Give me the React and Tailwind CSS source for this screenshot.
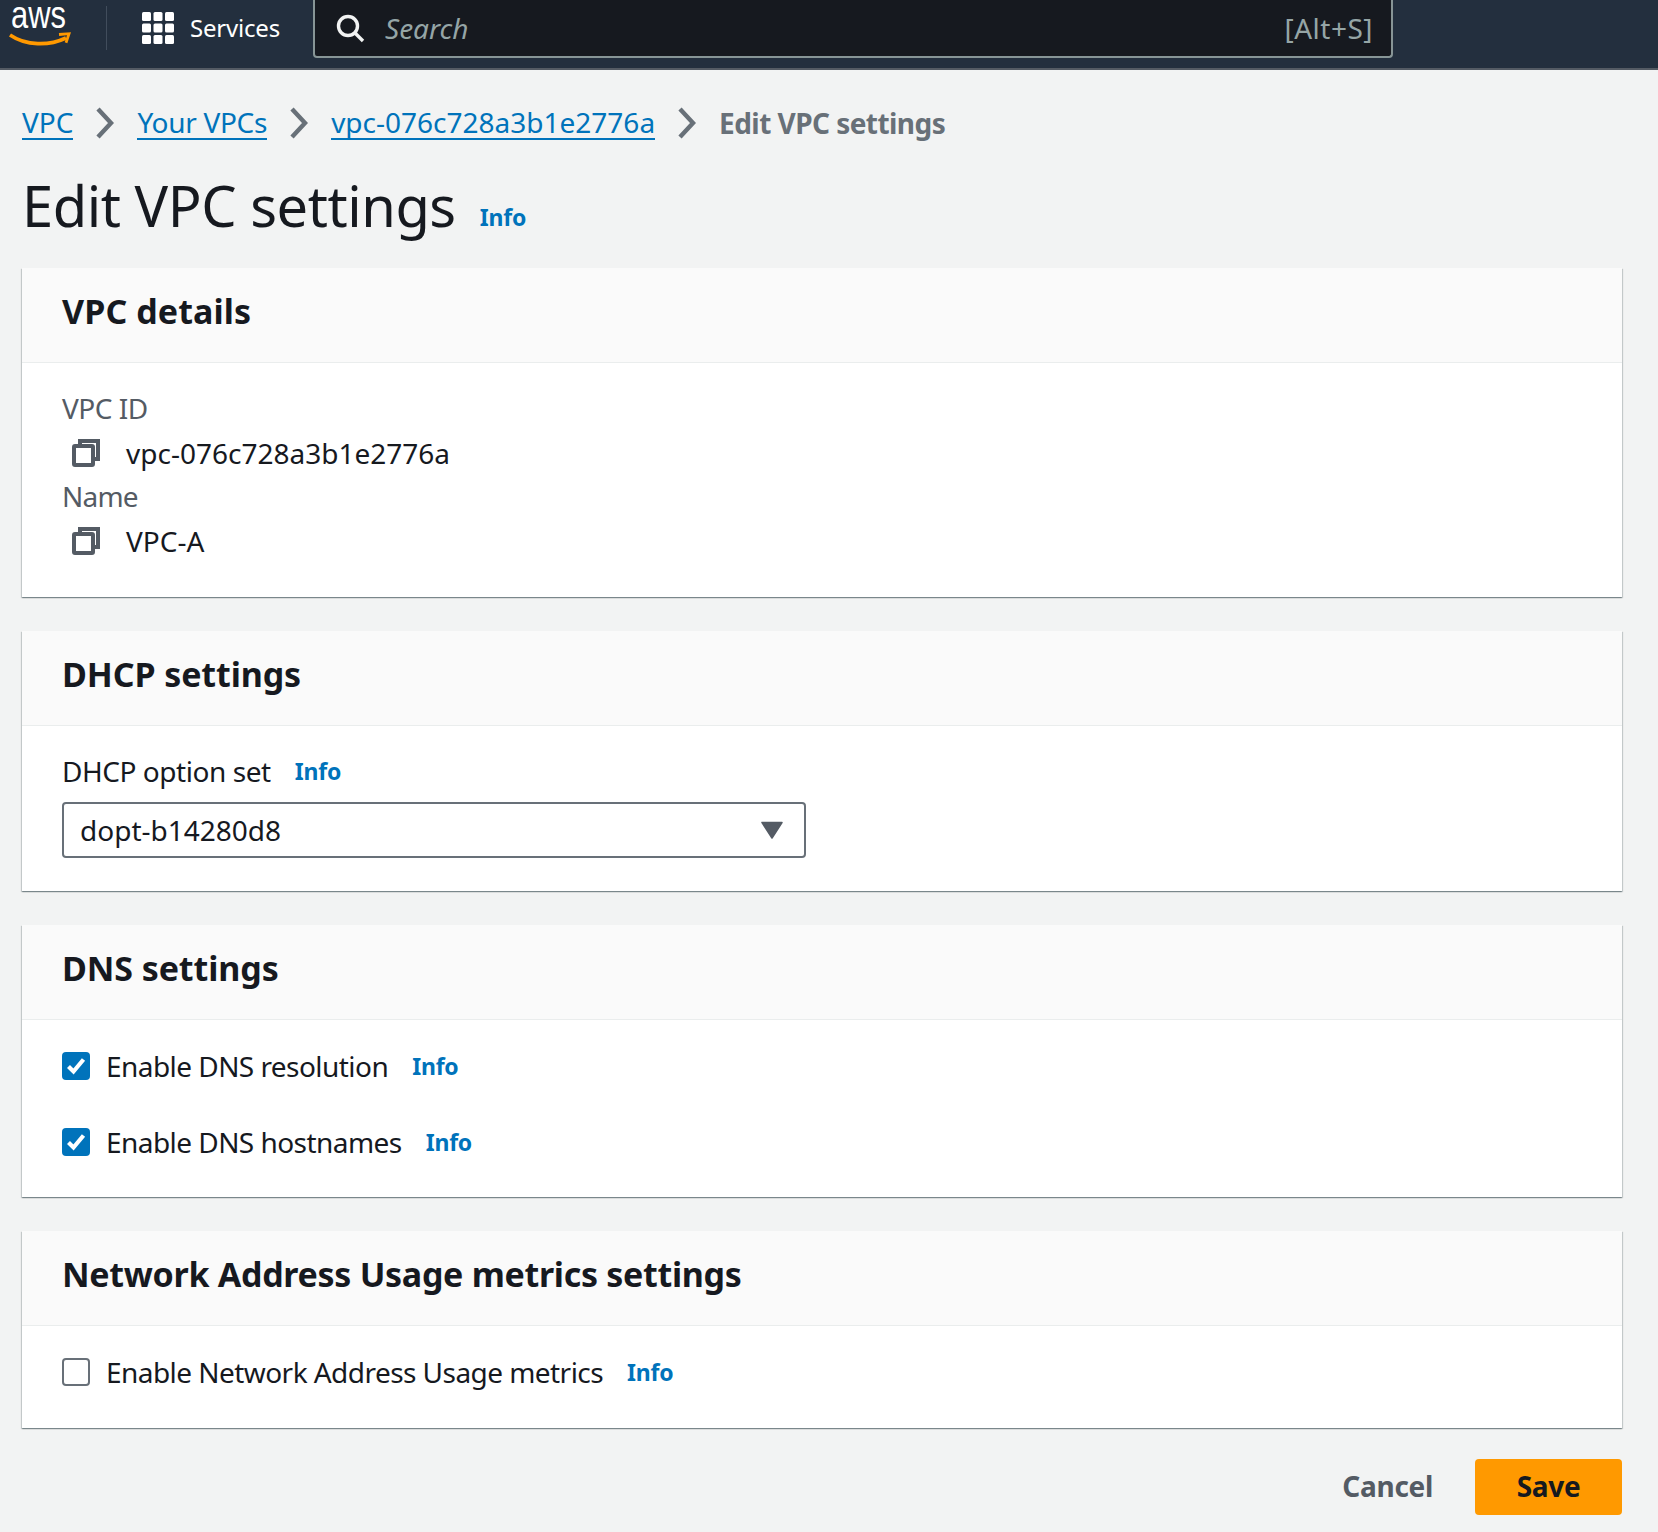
const Info = ({ className = '' }) => (
  <a className={`text-[23px] leading-[32px] font-bold text-[#0073bb] tracking-[-0.2px] ${className}`}>Info</a>
);

const Chevron = () => (
  <svg width="20" height="32" viewBox="0 0 20 32" fill="none" className="shrink-0">
    <path d="M3 2l13 14L3 30" stroke="#687078" strokeWidth="4.4" />
  </svg>
);

const CopyIcon = () => (
  <svg width="28" height="28" viewBox="0 0 28 28" fill="none" className="shrink-0">
    <path d="M8 7V2h18v18h-5" stroke="#545b64" strokeWidth="4" />
    <rect x="2" y="7" width="19" height="19" rx="1" stroke="#545b64" strokeWidth="4" />
  </svg>
);

const Card = ({ title, titleClass = 'tracking-[0.1px]', bodyClass, children }) => (
  <section className="bg-white shadow-[0_1px_1px_0_rgba(0,28,36,0.3),1px_1px_1px_0_rgba(0,28,36,0.15),-1px_1px_1px_0_rgba(0,28,36,0.15)]">
    <div className="h-[95px] bg-[#fafafa] border-b border-[#eaeded] pl-[40px] flex items-center">
      <h2 className={`text-[34px] leading-[44px] font-bold text-[#16191f] pb-[8px] ${titleClass}`}>{title}</h2>
    </div>
    <div className={bodyClass}>{children}</div>
  </section>
);

const CheckRow = ({ label, checked }) => (
  <div className="flex items-center h-[32px]">
    {checked ? (
      <span className="w-[28px] h-[28px] rounded-[4px] bg-[#0073bb] flex items-center justify-center shrink-0">
        <svg width="20" height="20" viewBox="0 0 20 20" fill="none">
          <path d="M2.5 10.5l5 5L17.5 3.5" stroke="#fff" strokeWidth="4.2" />
        </svg>
      </span>
    ) : (
      <span className="w-[28px] h-[28px] rounded-[4px] bg-white border-2 border-[#687078] shrink-0" />
    )}
    <span className="ml-[16px] text-[28px] leading-[32px] text-[#16191f] tracking-[-0.55px]">{label}</span>
    <Info className="ml-[24px]" />
  </div>
);

export default function App() {
  return (
    <div className="min-h-[1532px] bg-[#f2f3f3] font-['Noto_Sans',sans-serif] overflow-hidden">
      <header className="h-[70px] bg-[#232f3e] border-b-2 border-[#545b64] flex items-start">
        <div className="w-[113px] h-[50px] relative shrink-0">
          <svg width="72" height="50" viewBox="0 0 72 50" fill="none" className="absolute left-0 top-0">
            <text x="11" y="28" fontSize="38" fill="#fff" textLength="55" lengthAdjust="spacingAndGlyphs" fontFamily="'Liberation Sans', sans-serif">aws</text>
            <path d="M10 35c16 11 39 11 56 3" stroke="#ff9900" strokeWidth="3.6" />
            <path d="M59 34.5l10-.8-3 9" stroke="#ff9900" strokeWidth="2.8" />
          </svg>
          <div className="absolute right-[6px] top-[6px] w-px h-[44px] bg-[#414d5c]" />
        </div>
        <div className="flex items-center h-[56px] ml-[29px] w-[171px] shrink-0">
          <svg width="32" height="32" viewBox="0 0 32 32" fill="#fff" className="shrink-0">
            <rect x="0" y="0" width="9" height="9" rx="1.5" />
            <rect x="11.5" y="0" width="9" height="9" rx="1.5" />
            <rect x="23" y="0" width="9" height="9" rx="1.5" />
            <rect x="0" y="11.5" width="9" height="9" rx="1.5" />
            <rect x="11.5" y="11.5" width="9" height="9" rx="1.5" />
            <rect x="23" y="11.5" width="9" height="9" rx="1.5" />
            <rect x="0" y="23" width="9" height="9" rx="1.5" />
            <rect x="11.5" y="23" width="9" height="9" rx="1.5" />
            <rect x="23" y="23" width="9" height="9" rx="1.5" />
          </svg>
          <span className="ml-[16px] text-[24px] leading-[32px] text-white tracking-[-0.2px]">Services</span>
        </div>
        <div className="w-[1080px] h-[58px] bg-[#16191f] border-2 border-t-0 border-[#879596] rounded-b-[4px] flex items-center pl-[20px] pr-[18px] shrink-0">
          <svg width="30" height="30" viewBox="0 0 30 30" fill="none" className="shrink-0">
            <circle cx="13" cy="13" r="9.5" stroke="#f2f3f3" strokeWidth="3.4" />
            <path d="M20 20l8 8" stroke="#f2f3f3" strokeWidth="3.4" />
          </svg>
          <span className="ml-[20px] text-[28px] leading-[32px] italic text-[#95a5a6]">Search</span>
          <span className="ml-auto text-[28px] leading-[32px] text-[#95a5a6] tracking-[0.5px]">[Alt+S]</span>
        </div>
      </header>

      <main className="px-[22px] w-[1644px]">
        <nav className="flex items-center mt-[37px] h-[32px] text-[28px] leading-[32px]">
          <a className="text-[#0073bb] border-b-2 border-[#0073bb]">VPC</a>
          <span className="mx-[22px] flex"><Chevron /></span>
          <a className="text-[#0073bb] border-b-2 border-[#0073bb] tracking-[-0.3px]">Your VPCs</a>
          <span className="mx-[22px] flex"><Chevron /></span>
          <a className="text-[#0073bb] border-b-2 border-[#0073bb]">vpc-076c728a3b1e2776a</a>
          <span className="mx-[22px] flex"><Chevron /></span>
          <span className="font-bold text-[#687078] tracking-[-0.55px]">Edit VPC settings</span>
        </nav>

        <div className="flex items-baseline mt-[33px] h-[66px]">
          <h1 className="text-[56px] leading-[66px] font-normal text-[#16191f] tracking-[-0.45px]">Edit VPC settings</h1>
          <Info className="ml-[24px] -translate-y-px" />
        </div>

        <div className="mt-[30px] flex flex-col gap-[34px]">
          <Card title="VPC details" bodyClass="h-[234px] pl-[40px] pt-[29px]">
            <div className="text-[28px] leading-[32px] text-[#545b64] tracking-[-0.5px]">VPC ID</div>
            <div className="flex items-center h-[32px] mt-[13px] pl-[10px]">
              <CopyIcon />
              <span className="ml-[26px] text-[28px] leading-[32px] text-[#16191f]">vpc-076c728a3b1e2776a</span>
            </div>
            <div className="text-[28px] leading-[32px] text-[#545b64] mt-[11px] tracking-[-0.8px]">Name</div>
            <div className="flex items-center h-[32px] mt-[13px] pl-[10px]">
              <CopyIcon />
              <span className="ml-[26px] text-[28px] leading-[32px] text-[#16191f]">VPC-A</span>
            </div>
          </Card>

          <Card title="DHCP settings" titleClass="tracking-[-0.1px]" bodyClass="h-[165px] pl-[40px] pt-[29px]">
            <div className="flex items-center h-[32px]">
              <span className="text-[28px] leading-[32px] text-[#16191f] tracking-[-0.45px]">DHCP option set</span>
              <Info className="ml-[24px]" />
            </div>
            <div className="mt-[15px] w-[744px] h-[56px] rounded-[4px] border-2 border-[#687078] bg-white flex items-center pl-[16px] pr-[21px]">
              <span className="text-[28px] leading-[32px] text-[#16191f] pb-[1px]">dopt-b14280d8</span>
              <svg width="22" height="18" viewBox="0 0 22 18" fill="#545b64" className="ml-auto">
                <path d="M1 1.5h20L11 17z" stroke="#545b64" strokeWidth="1.5" strokeLinejoin="round" />
              </svg>
            </div>
          </Card>

          <Card title="DNS settings" titleClass="tracking-[-0.1px]" bodyClass="h-[177px] pl-[40px] pt-[30px]">
            <CheckRow label="Enable DNS resolution" checked />
            <div className="mt-[44px]">
              <CheckRow label="Enable DNS hostnames" checked />
            </div>
          </Card>

          <Card title="Network Address Usage metrics settings" titleClass="tracking-[-0.3px]" bodyClass="h-[102px] pl-[40px] pt-[30px]">
            <CheckRow label="Enable Network Address Usage metrics" />
          </Card>
        </div>

        <div className="flex items-center justify-end mt-[31px]">
          <button className="text-[28px] leading-[32px] font-bold text-[#545b64] tracking-[-0.3px] mr-[42px] pb-[2px]">Cancel</button>
          <button className="w-[147px] h-[56px] rounded-[4px] bg-[#ff9900] text-[28px] leading-[32px] font-bold text-[#16191f] tracking-[-0.3px] pb-[2px]">Save</button>
        </div>
      </main>
    </div>
  );
}
